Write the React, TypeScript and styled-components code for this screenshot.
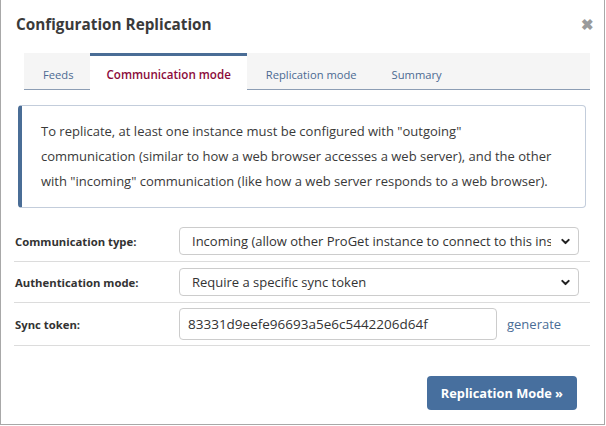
import React from 'react';
import styled, { createGlobalStyle } from 'styled-components';

const GlobalStyle = createGlobalStyle`
	html, body {
		margin: 0;
		padding: 0;
		background: #fff;
	}
	body {
		font-family: 'Open Sans', 'Liberation Sans', sans-serif;
		color: #333;
	}
`;

const Modal = styled.div`
	box-sizing: border-box;
	width: 605px;
	height: 425px;
	border: 1px solid #a8a8a8;
	border-top: none;
	background: #fff;
	display: flex;
	flex-direction: column;
`;

const Header = styled.div`
	display: flex;
	align-items: center;
	justify-content: space-between;
	height: 46px;
	padding: 1px 10px 0 15px;
`;

const Title = styled.h1`
	margin: 0;
	font-size: 15.3px;
	font-weight: 700;
	color: #3a3a3a;
`;

const Close = styled.button`
	border: none;
	background: none;
	padding: 0;
	color: #9a9a9a;
	font-size: 15px;
	font-weight: 700;
	line-height: 1;
	cursor: pointer;
`;

const TabStrip = styled.ul`
	display: flex;
	margin: 6px 14px 0 23px;
	padding: 0;
	list-style: none;
	height: 36px;
	background: #f5f5f5;
	border-bottom: 1px solid #8c9db4;
`;

const Tab = styled.li<{ $active?: boolean }>`
	display: flex;
	align-items: center;
	padding: 3px 16px 0 ${(p) => (p.$active ? '17px' : '19px')};
	font-size: ${(p) => (p.$active ? '11.6px' : '11.2px')};
	font-weight: ${(p) => (p.$active ? 600 : 400)};
	color: ${(p) => (p.$active ? '#8b0a3a' : '#4c6a92')};
	background: ${(p) => (p.$active ? '#fff' : 'transparent')};
	border-top: 3px solid ${(p) => (p.$active ? '#4a6d96' : 'transparent')};
	margin-bottom: ${(p) => (p.$active ? '-1px' : '0')};
	box-sizing: border-box;
`;

const Info = styled.div`
	margin: 15px 18px 0 17px;
	padding: 13px 20px 13px 19px;
	border: 1px solid #c3cddb;
	border-left: 4px solid #4a6d96;
	border-radius: 4px;
	font-size: 13px;
	line-height: 25px;
	color: #3a3a3a;
`;

const Form = styled.div`
	margin: 13px 14px 0 13px;
`;

const Row = styled.div`
	display: flex;
	align-items: center;
	padding: 5px 0 5px;
	border-bottom: 1px solid #dcdcdc;
`;

const Label = styled.label`
	width: 164px;
	flex-shrink: 0;
	font-size: 11.3px;
	font-weight: 700;
	color: #333;
	padding-left: 1px;
`;

const SelectBox = styled.div`
	display: flex;
	align-items: center;
	box-sizing: border-box;
	width: 400px;
	height: 28px;
	margin: 1px 0 1px;
	padding: 0 7px 0 12px;
	border: 1px solid #ccc;
	border-radius: 4px;
	font-size: 13px;
	color: #333;
`;

const SelectText = styled.span`
	flex: 1;
	overflow: hidden;
	white-space: nowrap;
	margin-right: 9px;
`;

const TokenInput = styled.input`
	box-sizing: border-box;
	width: 318px;
	height: 32px;
	padding: 0 8px;
	border: 1px solid #ccc;
	border-radius: 4px;
	font-family: inherit;
	font-size: 13.5px;
	color: #333;
`;

const GenerateLink = styled.a`
	margin-left: 10px;
	font-size: 13px;
	color: #4a6d96;
	text-decoration: none;
`;

const Footer = styled.div`
	display: flex;
	justify-content: flex-end;
	margin-top: auto;
	padding: 0 27px 14px 0;
`;

const PrimaryButton = styled.button`
	height: 34px;
	padding: 0 14px;
	border: none;
	border-radius: 4px;
	background: #476f9e;
	color: #fff;
	font-family: inherit;
	font-size: 12.8px;
	font-weight: 700;
	cursor: pointer;
`;

const Chevron = () => (
	<svg width="11" height="11" viewBox="0 0 12 12">
		<path d="M2.5 4.2l3.5 3.5 3.5-3.5" fill="none" stroke="#222" strokeWidth="2.2" strokeLinecap="round" strokeLinejoin="round" />
	</svg>
);

const App = () => {
	return (
		<>
			<GlobalStyle />
			<Modal>
				<Header>
					<Title>Configuration Replication</Title>
					<Close aria-label="close">✖</Close>
				</Header>
				<TabStrip>
					<Tab>Feeds</Tab>
					<Tab $active>Communication mode</Tab>
					<Tab>Replication mode</Tab>
					<Tab>Summary</Tab>
				</TabStrip>
				<Info>
					To replicate, at least one instance must be configured with "outgoing"
					<br />
					communication (similar to how a web browser accesses a web server), and the other
					with "incoming" communication (like how a web server responds to a web browser).
				</Info>
				<Form>
					<Row>
						<Label>Communication type:</Label>
						<SelectBox>
							<SelectText>Incoming (allow other ProGet instance to connect to this instance)</SelectText>
							<Chevron />
						</SelectBox>
					</Row>
					<Row>
						<Label>Authentication mode:</Label>
						<SelectBox>
							<SelectText>Require a specific sync token</SelectText>
							<Chevron />
						</SelectBox>
					</Row>
					<Row>
						<Label>Sync token:</Label>
						<TokenInput defaultValue="83331d9eefe96693a5e6c5442206d64f" />
						<GenerateLink href="#">generate</GenerateLink>
					</Row>
				</Form>
				<Footer>
					<PrimaryButton>Replication Mode »</PrimaryButton>
				</Footer>
			</Modal>
		</>
	);
};

export default App;
